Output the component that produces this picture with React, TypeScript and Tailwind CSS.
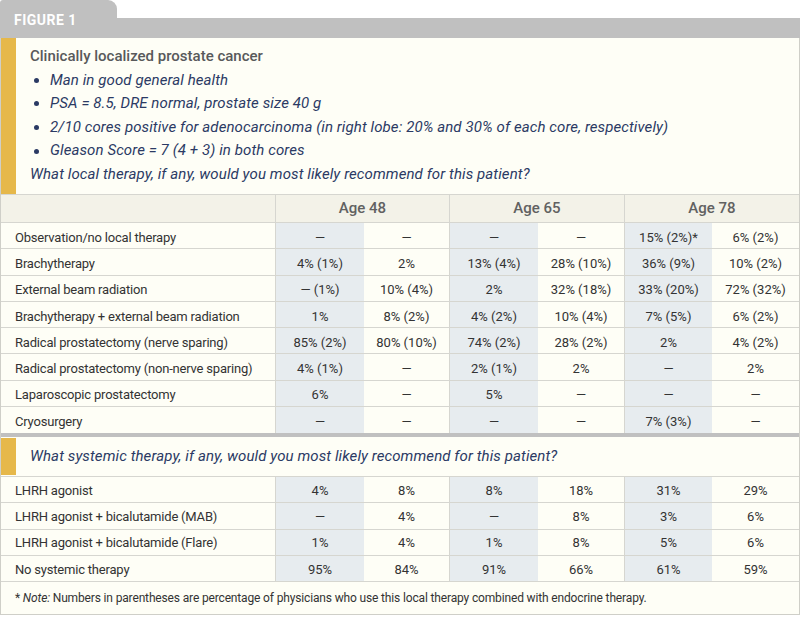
const font = { fontFamily: "Roboto, 'Liberation Sans', sans-serif" };

type Row = { label: string; values: string[] };

const localRows: Row[] = [
  { label: "Observation/no local therapy", values: ["—", "—", "—", "—", "15% (2%)*", "6% (2%)"] },
  { label: "Brachytherapy", values: ["4% (1%)", "2%", "13% (4%)", "28% (10%)", "36% (9%)", "10% (2%)"] },
  { label: "External beam radiation", values: ["— (1%)", "10% (4%)", "2%", "32% (18%)", "33% (20%)", "72% (32%)"] },
  { label: "Brachytherapy + external beam radiation", values: ["1%", "8% (2%)", "4% (2%)", "10% (4%)", "7% (5%)", "6% (2%)"] },
  { label: "Radical prostatectomy (nerve sparing)", values: ["85% (2%)", "80% (10%)", "74% (2%)", "28% (2%)", "2%", "4% (2%)"] },
  { label: "Radical prostatectomy (non-nerve sparing)", values: ["4% (1%)", "—", "2% (1%)", "2%", "—", "2%"] },
  { label: "Laparoscopic prostatectomy", values: ["6%", "—", "5%", "—", "—", "—"] },
  { label: "Cryosurgery", values: ["—", "—", "—", "—", "7% (3%)", "—"] },
];

const systemicRows: Row[] = [
  { label: "LHRH agonist", values: ["4%", "8%", "8%", "18%", "31%", "29%"] },
  { label: "LHRH agonist + bicalutamide (MAB)", values: ["—", "4%", "—", "8%", "3%", "6%"] },
  { label: "LHRH agonist + bicalutamide (Flare)", values: ["1%", "4%", "1%", "8%", "5%", "6%"] },
  { label: "No systemic therapy", values: ["95%", "84%", "91%", "66%", "61%", "59%"] },
];

const subWidths = ["w-[88px]", "w-[86px]", "w-[88px]", "w-[87px]", "w-[87px]", "w-[87px]"];

function DataRow({ row, last, pad }: { row: Row; last?: boolean; pad: string }) {
  return (
    <div className={`flex h-[26.25px] ${last ? "" : "border-b border-[#d6d6d0]"} text-[13px] text-[#333]`}>
      <div className={`w-[275px] pl-[14px] ${pad} flex items-center border-r border-[#d6d6d0] tracking-[-0.2px]`}>
        {row.label}
      </div>
      {row.values.map((v, i) => (
        <div
          key={i}
          className={`${subWidths[i]} ${pad} flex items-center justify-center ${i % 2 === 0 ? "bg-[#e7ecef]" : ""} ${
            i === 1 || i === 3 ? "border-r border-[#d6d6d0]" : ""
          }`}
        >
          {v}
        </div>
      ))}
    </div>
  );
}

export default function App() {
  return (
    <div className="w-[800px] h-[617px] bg-white" style={font}>
      {/* tab */}
      <div className="w-[117px] h-[18px] bg-[#c0c0c0] rounded-tl-[3px] rounded-tr-[9px]" />
      <div className="h-[20px] w-[800px] bg-[#c0c0c0] relative">
        <span className="absolute left-[14px] top-[-8px] text-white font-bold text-[14px] tracking-[0.5px]">
          FIGURE 1
        </span>
      </div>

      <div className="w-[800px] bg-[#fefef6] border-x border-[#cfcfc8] border-b">
        {/* case description */}
        <div className="flex h-[157px] border-b border-[#d6d6d0]">
          <div className="w-[15px] bg-[#e6b84a]" />
          <div className="pl-[14px] pt-[7px] leading-[23.6px] text-[15px]">
            <div className="text-[#58595b] font-medium">Clinically localized prostate cancer</div>
            {[
              "Man in good general health",
              "PSA = 8.5, DRE normal, prostate size 40 g",
              "2/10 cores positive for adenocarcinoma (in right lobe: 20% and 30% of each core, respectively)",
              "Gleason Score = 7 (4 + 3) in both cores",
            ].map((t) => (
              <div key={t} className="flex items-center italic text-[#2b3a64] tracking-[0.1px]">
                <span className="w-[20px] flex">
                  <span className="ml-[4px] w-[5px] h-[5px] rounded-full bg-[#2b3a64]" />
                </span>
                <span>{t}</span>
              </div>
            ))}
            <div className="italic text-[#2b3a64] tracking-[0.1px]">
              What local therapy, if any, would you most likely recommend for this patient?
            </div>
          </div>
        </div>

        {/* header */}
        <div className="flex h-[28px] bg-[#f3f2e8] border-b border-[#d6d6d0] text-[15px] font-medium text-[#616161]">
          <div className="w-[275px] border-r border-[#d6d6d0]" />
          <div className="w-[174px] flex items-center justify-center border-r border-[#d6d6d0]">Age 48</div>
          <div className="w-[175px] flex items-center justify-center border-r border-[#d6d6d0]">Age 65</div>
          <div className="w-[174px] flex items-center justify-center">Age 78</div>
        </div>

        {localRows.map((r, i) => (
          <DataRow key={r.label} row={r} pad="pt-[4px]" last={i === localRows.length - 1} />
        ))}

        {/* systemic question */}
        <div className="flex h-[44px] border-t-[4px] border-t-[#c0c0c0] border-b border-[#d6d6d0]">
          <div className="w-[15px] bg-[#e6b84a] my-[1px]" />
          <div className="pl-[14px] flex items-center italic text-[15px] text-[#2b3a64] tracking-[0.1px]">
            What systemic therapy, if any, would you most likely recommend for this patient?
          </div>
        </div>

        {systemicRows.map((r) => (
          <DataRow key={r.label} row={r} pad="pt-[2px]" />
        ))}

        <div className="h-[32px] pl-[14px] flex items-center text-[12px] text-[#333] tracking-[-0.15px]">
          <span>*&nbsp;</span>
          <span className="italic">Note:</span>
          <span>&nbsp;Numbers in parentheses are percentage of physicians who use this local therapy combined with endocrine therapy.</span>
        </div>
      </div>
    </div>
  );
}
